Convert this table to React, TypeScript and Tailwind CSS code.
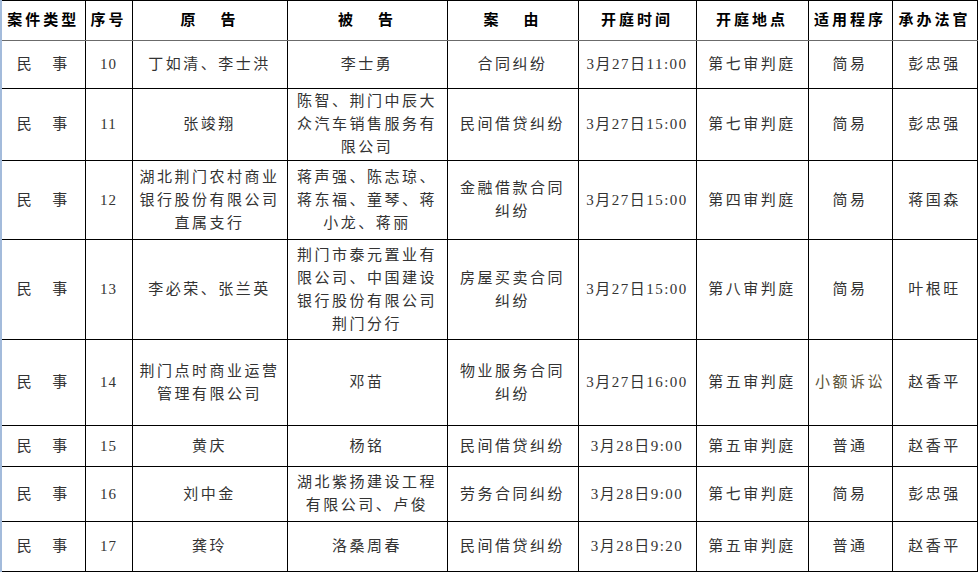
import React from "react";

type Row = {
  no: string;
  plaintiff: string[];
  defendant: string[];
  reason: string[];
  time: string;
  room: string;
  proc: string;
  judge: string;
  h: string;
  last?: boolean;
};

const rows: Row[] = [
  { no: "10", plaintiff: ["丁如清、李士洪"], defendant: ["李士勇"], reason: ["合同纠纷"], time: "3月27日11:00", room: "第七审判庭", proc: "简易", judge: "彭忠强", h: "h-[48px]" },
  { no: "11", plaintiff: ["张竣翔"], defendant: ["陈智、荆门中辰大", "众汽车销售服务有", "限公司"], reason: ["民间借贷纠纷"], time: "3月27日15:00", room: "第七审判庭", proc: "简易", judge: "彭忠强", h: "h-[72px]" },
  { no: "12", plaintiff: ["湖北荆门农村商业", "银行股份有限公司", "直属支行"], defendant: ["蒋声强、陈志琼、", "蒋东福、童琴、蒋", "小龙、蒋丽"], reason: ["金融借款合同", "纠纷"], time: "3月27日15:00", room: "第四审判庭", proc: "简易", judge: "蒋国森", h: "h-[79px]" },
  { no: "13", plaintiff: ["李必荣、张兰英"], defendant: ["荆门市泰元置业有", "限公司、中国建设", "银行股份有限公司", "荆门分行"], reason: ["房屋买卖合同", "纠纷"], time: "3月27日15:00", room: "第八审判庭", proc: "简易", judge: "叶根旺", h: "h-[100px]" },
  { no: "14", plaintiff: ["荆门点时商业运营", "管理有限公司"], defendant: ["邓苗"], reason: ["物业服务合同", "纠纷"], time: "3月27日16:00", room: "第五审判庭", proc: "小额诉讼", judge: "赵香平", h: "h-[86px]" },
  { no: "15", plaintiff: ["黄庆"], defendant: ["杨铭"], reason: ["民间借贷纠纷"], time: "3月28日9:00", room: "第五审判庭", proc: "普通", judge: "赵香平", h: "h-[41px]" },
  { no: "16", plaintiff: ["刘中金"], defendant: ["湖北紫扬建设工程", "有限公司、卢俊"], reason: ["劳务合同纠纷"], time: "3月28日9:00", room: "第七审判庭", proc: "简易", judge: "彭忠强", h: "h-[55px]" },
  { no: "17", plaintiff: ["龚玲"], defendant: ["洛桑周春"], reason: ["民间借贷纠纷"], time: "3月28日9:20", room: "第五审判庭", proc: "普通", judge: "赵香平", h: "h-[50px]", last: true },
];

function Lines({ lines }: { lines: string[] }) {
  return (
    <>
      {lines.map((l, i) => (
        <div key={i}>{l}</div>
      ))}
    </>
  );
}

export default function App() {
  const cell = "border border-black text-center align-middle p-0";
  return (
    <div
      className="w-[978px] h-[572px] bg-white overflow-hidden"
      style={{ fontFamily: '"Liberation Serif", "Noto Sans CJK SC", serif' }}
    >
      <table className="table-fixed border-collapse w-[976px] text-[15px] leading-[23px] tracking-[2.5px] text-[#333]">
        <colgroup>
          <col className="w-[84px]" />
          <col className="w-[47px]" />
          <col className="w-[155px]" />
          <col className="w-[160px]" />
          <col className="w-[131px]" />
          <col className="w-[118px]" />
          <col className="w-[112px]" />
          <col className="w-[84px]" />
          <col className="w-[85px]" />
        </colgroup>
        <thead>
          <tr className="h-[40px] font-bold text-black tracking-[3px]">
            <th className={`${cell} border-l-2 border-l-[#a3bbdb] border-b-[#6b6b6b]`}>案件类型</th>
            <th className={`${cell} border-b-[#6b6b6b]`}>序号</th>
            <th className={`${cell} border-b-[#6b6b6b]`}>
              <span className="mr-[22px]">原</span>告
            </th>
            <th className={`${cell} border-b-[#6b6b6b]`}>
              <span className="mr-[22px]">被</span>告
            </th>
            <th className={`${cell} border-b-[#6b6b6b]`}>
              <span className="mr-[22px]">案</span>由
            </th>
            <th className={`${cell} border-b-[#6b6b6b]`}>开庭时间</th>
            <th className={`${cell} border-b-[#6b6b6b]`}>开庭地点</th>
            <th className={`${cell} border-b-[#6b6b6b]`}>适用程序</th>
            <th className={`${cell} border-b-[#6b6b6b]`}>承办法官</th>
          </tr>
        </thead>
        <tbody>
          {rows.map((r) => {
            const c = r.last ? `${cell} border-b-dashed` : cell;
            return (
              <tr key={r.no} className={r.h}>
                <td className={`${c} border-l-2 border-l-[#a3bbdb]`}>
                  <span className="mr-[18px]">民</span>事
                </td>
                <td className={`${c} tracking-[1px]`}>{r.no}</td>
                <td className={c}>
                  <Lines lines={r.plaintiff} />
                </td>
                <td className={c}>
                  <Lines lines={r.defendant} />
                </td>
                <td className={c}>
                  <Lines lines={r.reason} />
                </td>
                <td className={`${c} tracking-[1.5px] whitespace-nowrap`}>{r.time}</td>
                <td className={c}>{r.room}</td>
                <td className={`${c} ${r.proc === "小额诉讼" ? "text-[#5a5236]" : ""}`}>{r.proc}</td>
                <td className={c}>{r.judge}</td>
              </tr>
            );
          })}
        </tbody>
      </table>
    </div>
  );
}
